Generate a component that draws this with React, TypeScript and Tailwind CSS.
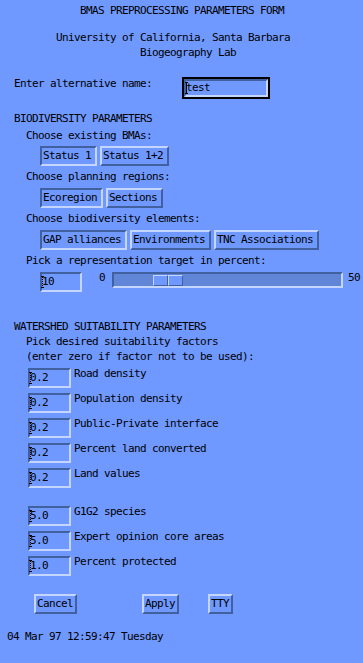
import React from "react";

const T = "font-['DejaVu_Sans_Mono','Liberation_Mono',monospace] text-[11px] tracking-[-0.62px] leading-[12px] text-black whitespace-pre";
const RAISED = "border-2 border-t-[#c4d6ff] border-l-[#c4d6ff] border-b-[#41609f] border-r-[#41609f]";
const SUNKEN = "border-2 border-t-[#41609f] border-l-[#41609f] border-b-[#c4d6ff] border-r-[#c4d6ff]";

function Cursor({ dotted }: { dotted?: boolean }) {
  return (
    <span className="relative inline-block w-0 h-[12px] align-top">
      <span
        className={
          dotted
            ? "absolute left-0 top-[0px] h-[12px] w-0 border-l border-dotted border-black"
            : "absolute left-0 top-[0px] h-[12px] w-[1px] bg-black"
        }
      />
      <span className="absolute -left-[1px] top-0 w-[3px] h-[1px] bg-black" />
      <span className="absolute -left-[1px] bottom-0 w-[3px] h-[1px] bg-black" />
    </span>
  );
}

function ToggleBtn({ label, set }: { label: string; set?: boolean }) {
  return (
    <div className={`${set ? SUNKEN : RAISED} h-[20px] pl-[1px] pr-[4px] flex items-center bg-[#7099ff]`}>
      <span className={`${T} leading-[16px]`}>{label}</span>
    </div>
  );
}

function NumField({ value, w }: { value: string; w: string }) {
  return (
    <div className={`${SUNKEN} ${w} h-[20px] flex items-center shrink-0`}>
      <span className={`${T} leading-[16px] flex items-center`}>
        <Cursor dotted />
        {value}
      </span>
    </div>
  );
}

function FactorRow({ value, label, mt }: { value: string; label: string; mt: string }) {
  return (
    <div className={`flex items-start ${mt} pl-[28px]`}>
      <NumField value={value} w="w-[43px]" />
      <span className={`${T} ml-[3px]`}>{label}</span>
    </div>
  );
}

function ActionBtn({ label, w, ml }: { label: string; w: string; ml: string }) {
  return (
    <div className={`${RAISED} ${w} ${ml} h-[20px] pl-[1px] flex items-center`}>
      <span className={`${T} leading-[16px]`}>{label}</span>
    </div>
  );
}

export default function App() {
  return (
    <div className="w-[363px] min-h-[663px] bg-[#7099ff] pt-[5px] overflow-hidden">
      <div className={`${T} pl-[80px]`}>BMAS PREPROCESSING PARAMETERS FORM</div>
      <div className={`${T} pl-[56px] mt-[15px]`}>University of California, Santa Barbara</div>
      <div className={`${T} pl-[140px] mt-[3px]`}>Biogeography Lab</div>

      <div className="flex items-start mt-[18px]">
        <span className={`${T} pl-[14px] mt-[1px] w-[182px]`}>Enter alternative name:</span>
        <div className="border-2 border-black w-[88px] h-[22px]">
          <div className={`${SUNKEN} h-full flex items-center`}>
            <span className={`${T} leading-[14px] flex items-center`}>
              <Cursor />
              test
            </span>
          </div>
        </div>
      </div>

      <div className={`${T} pl-[14px] mt-[14px]`}>BIODIVERSITY PARAMETERS</div>

      <div className={`${T} pl-[26px] mt-[5px]`}>Choose existing BMAs:</div>
      <div className="flex gap-[3px] pl-[40px] mt-[4px]">
        <ToggleBtn label="Status 1" set />
        <ToggleBtn label="Status 1+2" />
      </div>

      <div className={`${T} pl-[26px] mt-[5px]`}>Choose planning regions:</div>
      <div className="flex gap-[3px] pl-[40px] mt-[5px]">
        <ToggleBtn label="Ecoregion" set />
        <ToggleBtn label="Sections" />
      </div>

      <div className={`${T} pl-[26px] mt-[5px]`}>Choose biodiversity elements:</div>
      <div className="flex gap-[3px] pl-[40px] mt-[5px]">
        <ToggleBtn label="GAP alliances" set />
        <ToggleBtn label="Environments" />
        <ToggleBtn label="TNC Associations" />
      </div>

      <div className={`${T} pl-[26px] mt-[5px]`}>Pick a representation target in percent:</div>
      <div className="flex items-start pl-[40px] mt-[5px]">
        <NumField value="10" w="w-[42px]" />
        <span className={`${T} ml-[17px] w-[13px]`}>0</span>
        <div className={`${SUNKEN} w-[231px] h-[16px] bg-[#6186d8] flex items-center pl-[39px]`}>
          <div className="flex h-[11px]">
            <div className="w-[15px] h-full bg-[#7099ff] border border-t-[#c4d6ff] border-l-[#c4d6ff] border-b-[#41609f] border-r-[#41609f]" />
            <div className="w-[15px] h-full bg-[#7099ff] border border-t-[#c4d6ff] border-l-[#c4d6ff] border-b-[#41609f] border-r-[#41609f]" />
          </div>
        </div>
        <span className={`${T} ml-[5px]`}>50</span>
      </div>

      <div className={`${T} pl-[14px] mt-[29px]`}>WATERSHED SUITABILITY PARAMETERS</div>
      <div className={`${T} pl-[26px] mt-[3px]`}>Pick desired suitability factors</div>
      <div className={`${T} pl-[26px] mt-[3px]`}>(enter zero if factor not to be used):</div>

      <FactorRow value="0.2" label="Road density" mt="mt-[5px]" />
      <FactorRow value="0.2" label="Population density" mt="mt-[5px]" />
      <FactorRow value="0.2" label="Public-Private interface" mt="mt-[5px]" />
      <FactorRow value="0.2" label="Percent land converted" mt="mt-[5px]" />
      <FactorRow value="0.2" label="Land values" mt="mt-[5px]" />

      <FactorRow value="5.0" label="G1G2 species" mt="mt-[18px]" />
      <FactorRow value="5.0" label="Expert opinion core areas" mt="mt-[5px]" />
      <FactorRow value="1.0" label="Percent protected" mt="mt-[5px]" />

      <div className="flex mt-[18px]">
        <ActionBtn label="Cancel" w="w-[43px]" ml="ml-[34px]" />
        <ActionBtn label="Apply" w="w-[37px]" ml="ml-[65px]" />
        <ActionBtn label="TTY" w="w-[25px]" ml="ml-[29px]" />
      </div>

      <div className={`${T} pl-[7px] mt-[17px]`}>04 Mar 97 12:59:47 Tuesday</div>
    </div>
  );
}
